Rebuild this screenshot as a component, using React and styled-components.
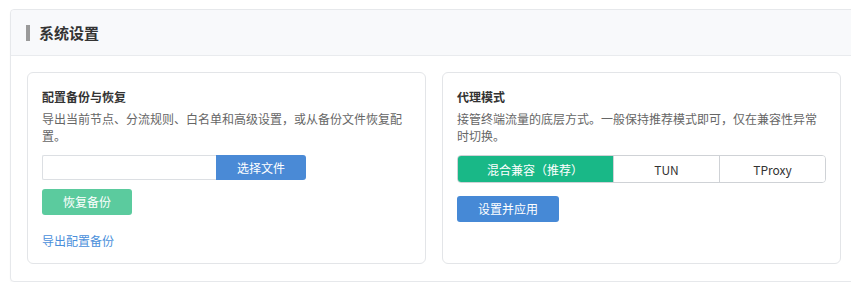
import React from "react";
import styled, { createGlobalStyle } from "styled-components";

const Global = createGlobalStyle`
  html, body { margin: 0; padding: 0; background: #ffffff; overflow: hidden; }
  body { font-family: "Noto Sans CJK SC", "Noto Sans", sans-serif; color: #333; }
  * { box-sizing: border-box; }
`;

const Page = styled.div`
  padding: 9px 0 0 10px;
  width: 880px;
`;

const Panel = styled.section`
  width: 848px;
  border: 1px solid #e6e8eb;
  border-radius: 4px;
  background: #fff;
  box-shadow: 0 1px 2px rgba(0, 0, 0, 0.03);
`;

const PanelHeader = styled.header`
  display: flex;
  align-items: center;
  gap: 9px;
  height: 46px;
  padding: 0 15px;
  background: #f8f9fb;
  border-bottom: 1px solid #e9ebee;
  border-radius: 4px 4px 0 0;
`;

const Bar = styled.span`
  width: 4px;
  height: 16px;
  background: #9a9a9a;
`;

const PanelTitle = styled.h2`
  margin: 0;
  font-size: 15px;
  font-weight: 700;
  line-height: 20px;
  color: #333;
`;

const PanelBody = styled.div`
  display: grid;
  grid-template-columns: 1fr 1fr;
  gap: 16px;
  padding: 16px 16px 17px;
`;

const Card = styled.div`
  display: flex;
  flex-direction: column;
  align-items: flex-start;
  border: 1px solid #e3e5e8;
  border-radius: 6px;
  padding: 15px 14px 14px;
  min-height: 192px;
`;

const CardTitle = styled.h3`
  margin: 0 0 6px;
  font-size: 12px;
  font-weight: 700;
  line-height: 17px;
  color: #333;
`;

const Desc = styled.p`
  margin: 0 0 11px;
  font-size: 12px;
  line-height: 16.5px;
  color: #666;
  width: 100%;
`;

const FileRow = styled.div`
  display: flex;
  height: 25px;
  margin-bottom: 9px;
`;

const FileInput = styled.div`
  width: 174px;
  height: 25px;
  border: 1px solid #dcdfe3;
  border-right: none;
  border-radius: 2px 0 0 2px;
  background: #fff;
`;

const Button = styled.button`
  display: inline-flex;
  align-items: center;
  justify-content: center;
  width: ${(p) => p.$w}px;
  height: ${(p) => p.$h || 26}px;
  padding: 0;
  border: none;
  border-radius: ${(p) => p.$radius || "3px"};
  background: ${(p) => p.$bg};
  color: #fff;
  font-family: inherit;
  font-size: 12px;
  line-height: 1;
  cursor: pointer;
`;

const Link = styled.a`
  margin-top: 17px;
  font-size: 12px;
  line-height: 17px;
  color: #4a8fdb;
  text-decoration: none;
  cursor: pointer;
`;

const Segmented = styled.div`
  display: grid;
  grid-template-columns: 155px 1fr 1fr;
  width: 100%;
  height: 28px;
  border: 1px solid #cfd2d6;
  border-radius: 4px;
  overflow: hidden;
  margin-bottom: 13px;
`;

const Segment = styled.div`
  display: flex;
  align-items: center;
  justify-content: center;
  font-size: 12px;
  color: ${(p) => (p.$active ? "#fff" : "#333")};
  background: ${(p) => (p.$active ? "#19b887" : "#fff")};
  border-left: ${(p) => (p.$first ? "none" : "1px solid #cfd2d6")};
  margin: ${(p) => (p.$active ? "-1px 0 -1px -1px" : "0")};
`;

export default function App() {
  return (
    <>
      <Global />
      <Page>
        <Panel>
          <PanelHeader>
            <Bar />
            <PanelTitle>系统设置</PanelTitle>
          </PanelHeader>
          <PanelBody>
            <Card>
              <CardTitle>配置备份与恢复</CardTitle>
              <Desc>导出当前节点、分流规则、白名单和高级设置，或从备份文件恢复配置。</Desc>
              <FileRow>
                <FileInput />
                <Button $w={90} $h={25} $bg="#4a8ad6" $radius="0 3px 3px 0">选择文件</Button>
              </FileRow>
              <Button $w={90} $bg="#5bcb9e">恢复备份</Button>
              <Link>导出配置备份</Link>
            </Card>
            <Card>
              <CardTitle>代理模式</CardTitle>
              <Desc>接管终端流量的底层方式。一般保持推荐模式即可，仅在兼容性异常时切换。</Desc>
              <Segmented>
                <Segment $active $first>混合兼容（推荐）</Segment>
                <Segment>TUN</Segment>
                <Segment>TProxy</Segment>
              </Segmented>
              <Button $w={102} $bg="#4689d6">设置并应用</Button>
            </Card>
          </PanelBody>
        </Panel>
      </Page>
    </>
  );
}
